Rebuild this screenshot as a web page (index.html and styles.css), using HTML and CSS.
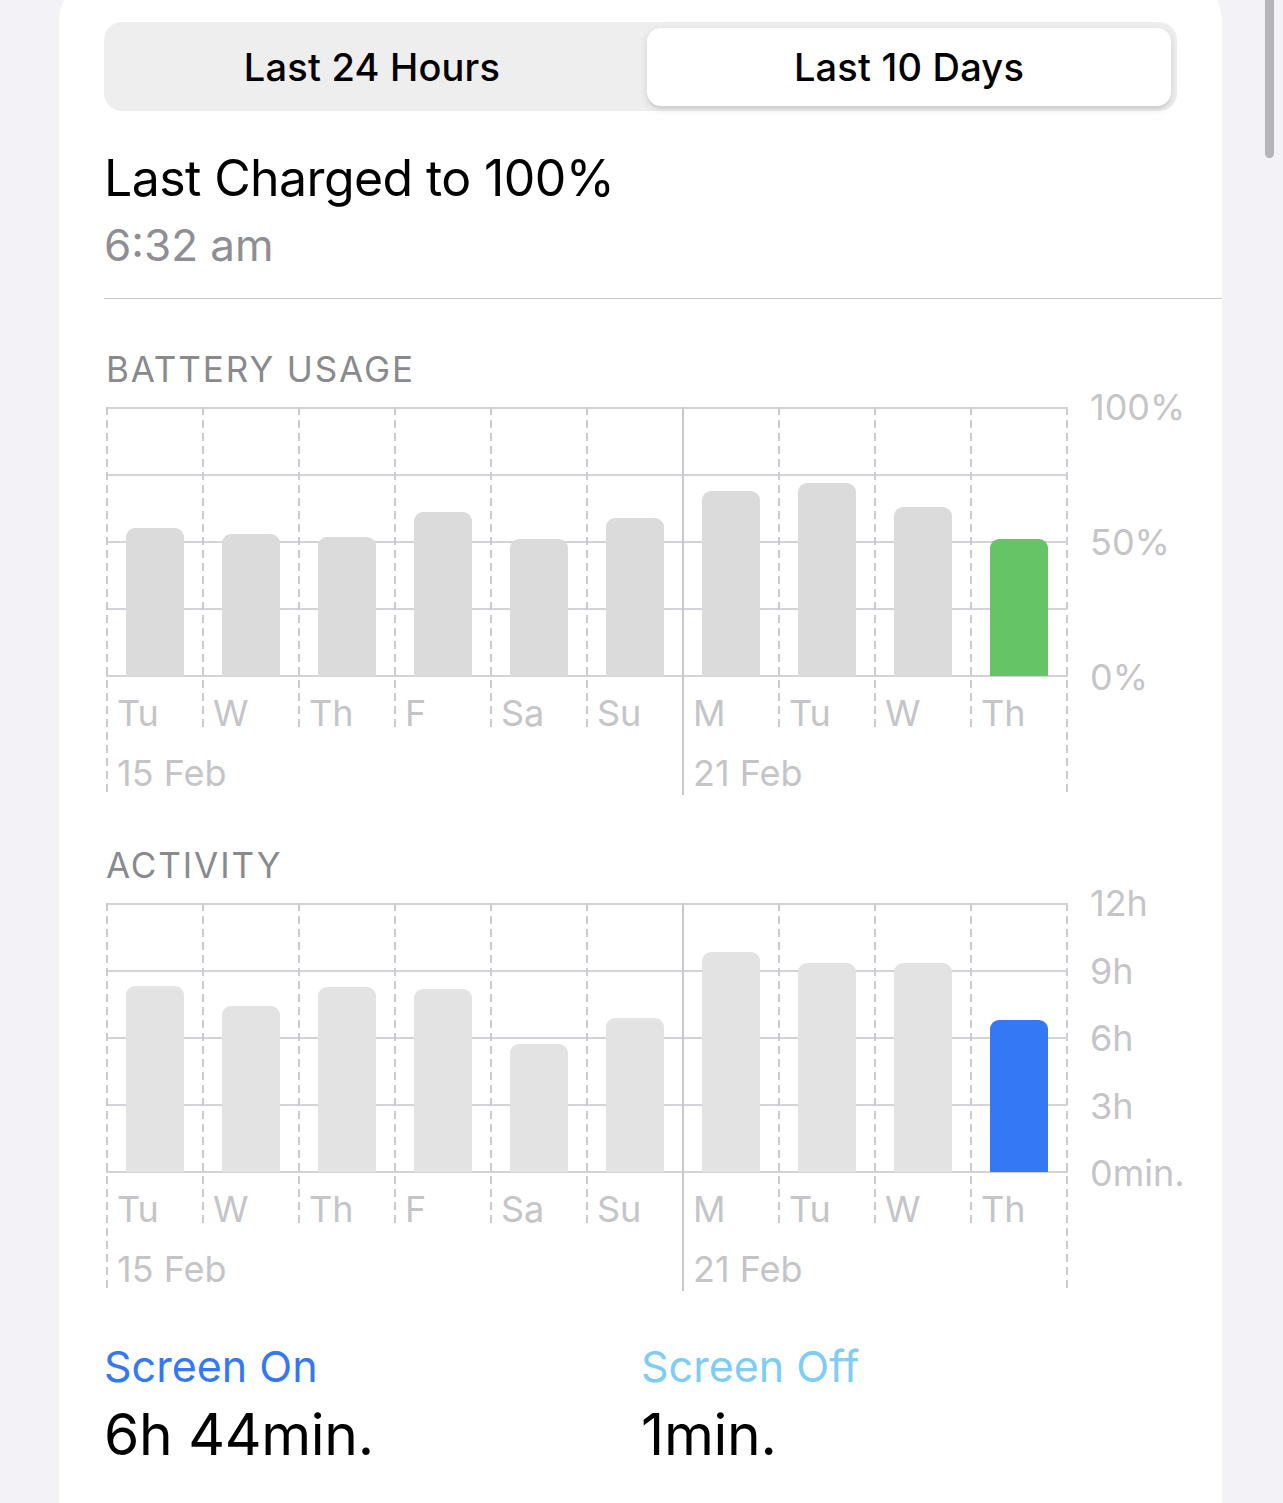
FILE: index.html
```html
<!DOCTYPE html>
<html lang="en">
<head>
<meta charset="utf-8">
<title>Battery</title>
<link rel="stylesheet" href="styles.css">
</head>
<body>
<div class="scrollbar"></div>
<main class="card">
  <div class="segmented">
    <div class="seg">Last 24 Hours</div>
    <div class="seg active">Last 10 Days</div>
  </div>

  <div class="charged">
    <div class="charged-title">Last Charged to 100%</div>
    <div class="charged-time">6:32 am</div>
  </div>
  <div class="divider"></div>

  <section class="chart-section">
    <h3 class="section-title">BATTERY USAGE</h3>
    <div class="chart">
      <div class="chart-main">
        <div class="col edge"><div class="cell"><div class="bar" style="height:148px"></div></div><div class="day">Tu</div><div class="date">15 Feb</div></div>
        <div class="col"><div class="cell"><div class="bar" style="height:142px"></div></div><div class="day">W</div><div class="date"></div></div>
        <div class="col"><div class="cell"><div class="bar" style="height:139px"></div></div><div class="day">Th</div><div class="date"></div></div>
        <div class="col"><div class="cell"><div class="bar" style="height:164px"></div></div><div class="day">F</div><div class="date"></div></div>
        <div class="col"><div class="cell"><div class="bar" style="height:137px"></div></div><div class="day">Sa</div><div class="date"></div></div>
        <div class="col"><div class="cell"><div class="bar" style="height:158px"></div></div><div class="day">Su</div><div class="date"></div></div>
        <div class="col week"><div class="cell"><div class="bar" style="height:185px"></div></div><div class="day">M</div><div class="date">21 Feb</div></div>
        <div class="col"><div class="cell"><div class="bar" style="height:193px"></div></div><div class="day">Tu</div><div class="date"></div></div>
        <div class="col"><div class="cell"><div class="bar" style="height:169px"></div></div><div class="day">W</div><div class="date"></div></div>
        <div class="col"><div class="cell"><div class="bar green" style="height:137px"></div></div><div class="day">Th</div><div class="date"></div></div>
      </div>
      <div class="yaxis">
        <span>100%</span>
        <span>50%</span>
        <span>0%</span>
      </div>
    </div>
  </section>

  <section class="chart-section second">
    <h3 class="section-title">ACTIVITY</h3>
    <div class="chart">
      <div class="chart-main">
        <div class="col edge"><div class="cell"><div class="bar light" style="height:186px"></div></div><div class="day">Tu</div><div class="date">15 Feb</div></div>
        <div class="col"><div class="cell"><div class="bar light" style="height:166px"></div></div><div class="day">W</div><div class="date"></div></div>
        <div class="col"><div class="cell"><div class="bar light" style="height:185px"></div></div><div class="day">Th</div><div class="date"></div></div>
        <div class="col"><div class="cell"><div class="bar light" style="height:183px"></div></div><div class="day">F</div><div class="date"></div></div>
        <div class="col"><div class="cell"><div class="bar light" style="height:128px"></div></div><div class="day">Sa</div><div class="date"></div></div>
        <div class="col"><div class="cell"><div class="bar light" style="height:154px"></div></div><div class="day">Su</div><div class="date"></div></div>
        <div class="col week"><div class="cell"><div class="bar light" style="height:220px"></div></div><div class="day">M</div><div class="date">21 Feb</div></div>
        <div class="col"><div class="cell"><div class="bar light" style="height:209px"></div></div><div class="day">Tu</div><div class="date"></div></div>
        <div class="col"><div class="cell"><div class="bar light" style="height:209px"></div></div><div class="day">W</div><div class="date"></div></div>
        <div class="col"><div class="cell"><div class="bar blue" style="height:152px"></div></div><div class="day">Th</div><div class="date"></div></div>
      </div>
      <div class="yaxis">
        <span>12h</span>
        <span>9h</span>
        <span>6h</span>
        <span>3h</span>
        <span>0min.</span>
      </div>
    </div>
  </section>

  <div class="screen-stats">
    <div class="stat">
      <div class="stat-label on">Screen On</div>
      <div class="stat-value">6h 44min.</div>
    </div>
    <div class="stat">
      <div class="stat-label off">Screen Off</div>
      <div class="stat-value">1min.</div>
    </div>
  </div>
</main>
</body>
</html>
```

FILE: styles.css
```css
* { box-sizing: border-box; }

html, body {
  margin: 0;
  padding: 0;
}

body {
  background: #f2f2f7;
  height: 1503px;
  overflow: hidden;
  font-family: "Inter", "Liberation Sans", sans-serif;
  color: #000;
  position: relative;
}

.scrollbar {
  position: absolute;
  left: 1265px;
  top: -10px;
  width: 9px;
  height: 168px;
  border-radius: 5px;
  background: #b4b4b9;
}

.card {
  margin: -20px 61px 0 59px;
  min-height: 1600px;
  background: #fff;
  border-radius: 40px 40px 0 0;
  padding: 42px 45px 0 45px;
}

/* Segmented control */
.segmented {
  height: 89px;
  background: #eeeeef;
  border-radius: 18px;
  padding: 6px 6px 5px 6px;
  display: grid;
  grid-template-columns: 1fr 1fr;
  column-gap: 13px;
}

.seg {
  display: flex;
  align-items: center;
  justify-content: center;
  font-size: 38px;
  font-weight: 500;
  letter-spacing: 0.2px;
  border-radius: 14px;
  color: #000;
}

.seg.active {
  background: #fff;
  box-shadow: 0 3px 8px rgba(0, 0, 0, 0.12), 0 3px 1px rgba(0, 0, 0, 0.04);
}

/* Last charged */
.charged {
  margin-top: 37px;
}

.charged-title {
  font-size: 50px;
  line-height: 60px;
  font-weight: 400;
  letter-spacing: -0.6px;
}

.charged-time {
  margin-top: 9px;
  font-size: 44px;
  line-height: 56px;
  color: #8e8e93;
}

.divider {
  margin-top: 25px;
  margin-right: -45px;
  height: 1px;
  background: #c8c8cc;
}

/* Charts */
.chart-section {
  margin-top: 50px;
}

.chart-section.second {
  margin-top: 50px;
}

.section-title {
  margin: 0 0 18px 2px;
  font-size: 35px;
  line-height: 40px;
  font-weight: 400;
  letter-spacing: 1.9px;
  color: #8a8a8e;
}

.chart {
  display: flex;
  align-items: flex-start;
}

.chart-main {
  display: grid;
  grid-template-columns: repeat(10, 96px);
  margin-left: 2px;
  padding-right: 2px;
  background-image:
    linear-gradient(#d4d4d8, #d4d4d8),
    linear-gradient(#d4d4d8, #d4d4d8),
    linear-gradient(#d4d4d8, #d4d4d8),
    linear-gradient(#d4d4d8, #d4d4d8),
    linear-gradient(#d4d4d8, #d4d4d8),
    repeating-linear-gradient(to bottom, #cbcbcf 0 8px, transparent 8px 13px);
  background-size:
    100% 2px, 100% 2px, 100% 2px, 100% 2px, 100% 2px,
    2px 385px;
  background-position:
    0 0, 0 67px, 0 134px, 0 201px, 0 268px,
    right top;
  background-repeat: no-repeat;
}

.col {
  display: flex;
  flex-direction: column;
  background-image: repeating-linear-gradient(to bottom, #cbcbcf 0 8px, transparent 8px 13px);
  background-size: 2px 323px;
  background-position: left top;
  background-repeat: no-repeat;
}

.col.edge {
  background-size: 2px 385px;
}

.col.week {
  background-image: linear-gradient(#c9c9cd, #c9c9cd);
  background-size: 2px 390px;
}

.cell {
  height: 270px;
  padding: 0 0 1px 2px;
  display: flex;
  align-items: flex-end;
  justify-content: center;
}

.bar {
  width: 58px;
  border-radius: 9px 9px 0 0;
  background: #dbdbdb;
}

.bar.light { background: #e3e3e3; }
.bar.green { background: #65c466; }
.bar.blue { background: #3478f6; }

.day {
  height: 58px;
  padding: 14px 0 0 11px;
  font-size: 36px;
  line-height: 44px;
  color: #c5c5c8;
  white-space: nowrap;
}

.date {
  height: 60px;
  padding: 16px 0 0 11px;
  font-size: 36px;
  line-height: 44px;
  color: #c5c5c8;
  white-space: nowrap;
}

.yaxis {
  margin-left: 22px;
  margin-top: -20px;
  height: 310px;
  display: flex;
  flex-direction: column;
  justify-content: space-between;
}

.yaxis span {
  display: block;
  font-size: 36px;
  line-height: 40px;
  color: #c5c5c8;
  white-space: nowrap;
}

/* Screen stats */
.screen-stats {
  margin-top: 50px;
  display: grid;
  grid-template-columns: 537px 1fr;
}

.stat-label {
  font-size: 43px;
  line-height: 50px;
}

.stat-label.on { color: #3478f6; }
.stat-label.off { color: #7fcdf6; }

.stat-value {
  margin-top: 12px;
  font-size: 57px;
  line-height: 64px;
  letter-spacing: -0.3px;
}
```
